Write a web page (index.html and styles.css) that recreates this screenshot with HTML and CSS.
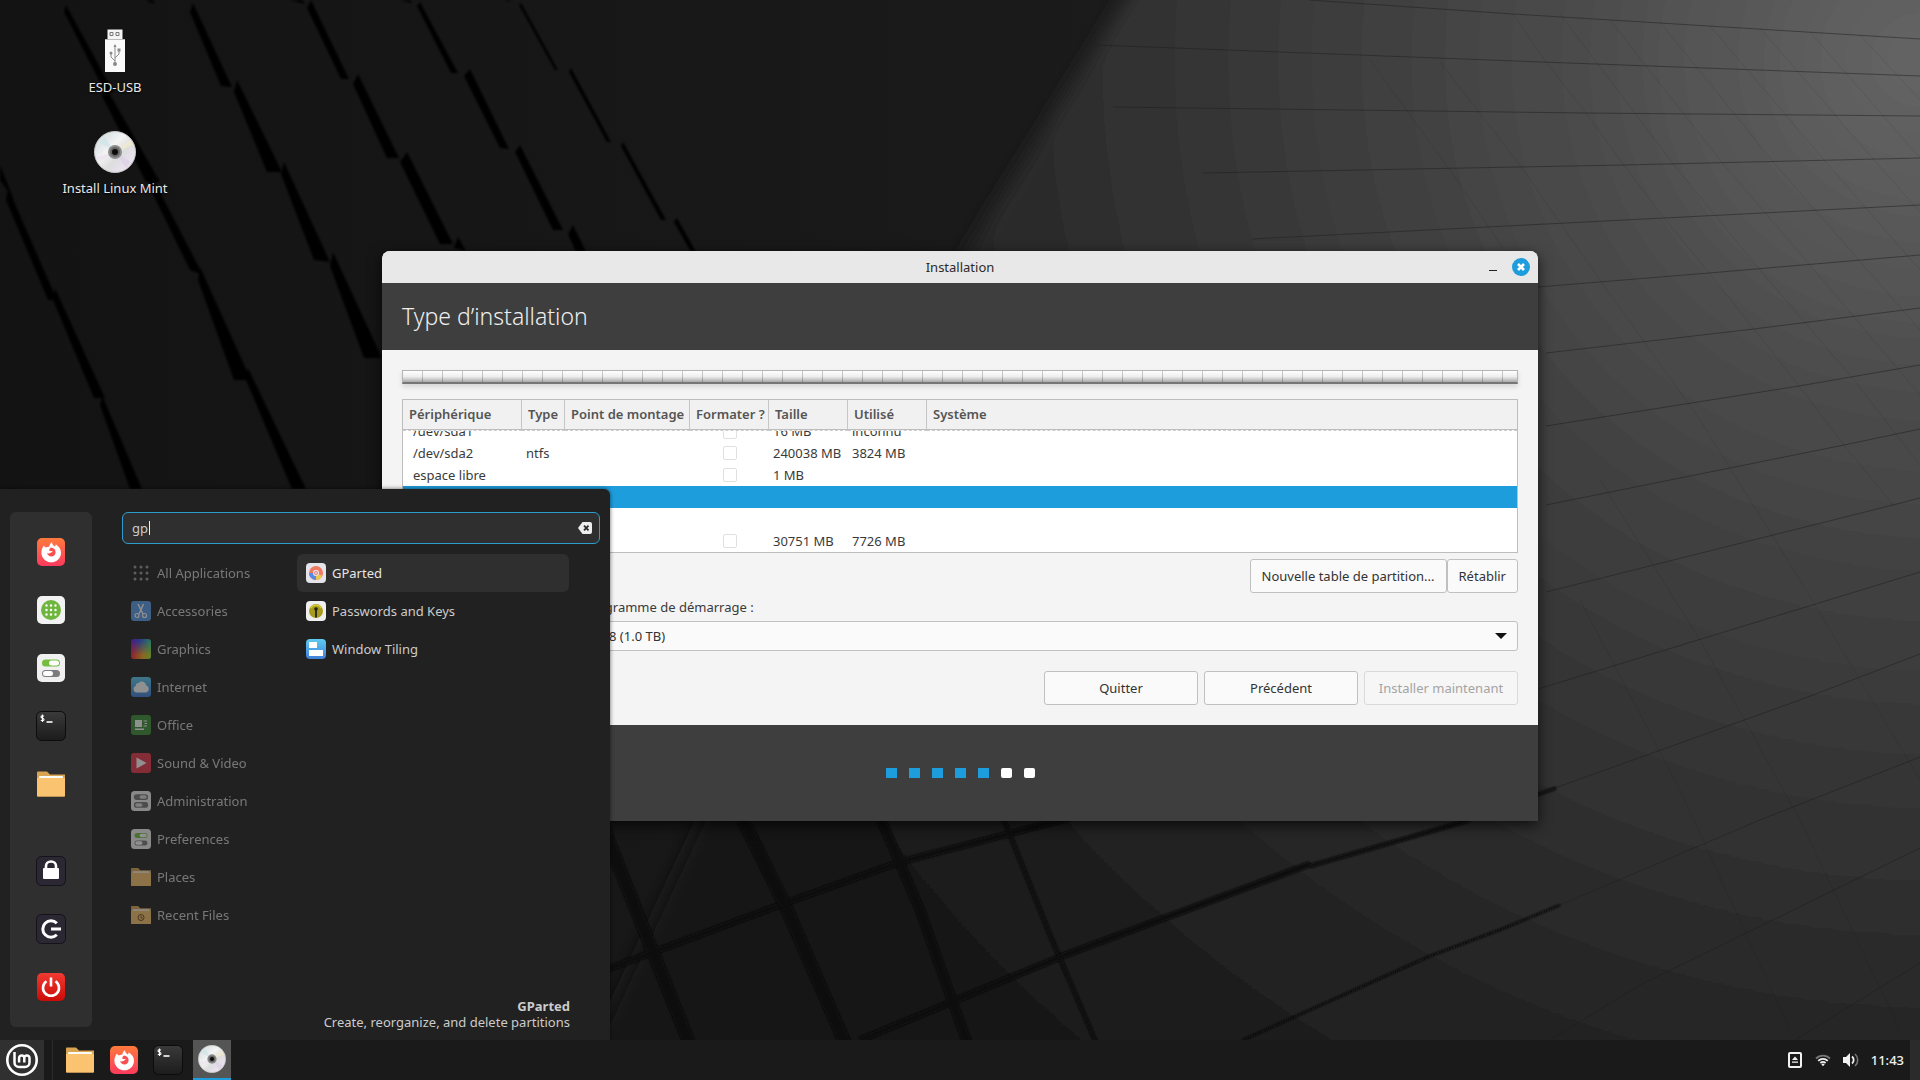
FILE: index.html
```html
<!DOCTYPE html>
<html lang="fr">
<head>
<meta charset="utf-8">
<title>Installation</title>
<link rel="stylesheet" href="styles.css">
</head>
<body>

<!-- shared icons -->
<svg class="sprite" width="0" height="0" aria-hidden="true">
  <defs>
    <linearGradient id="g-fox" x1="0" y1="0" x2="0" y2="1"><stop offset="0" stop-color="#ff7a3c"/><stop offset="1" stop-color="#fb3a5e"/></linearGradient>
    <linearGradient id="g-dark" x1="0" y1="0" x2="0" y2="1"><stop offset="0" stop-color="#3a3a3a"/><stop offset="1" stop-color="#1c1c1c"/></linearGradient>
    <linearGradient id="g-red" x1="0" y1="0" x2="0" y2="1"><stop offset="0" stop-color="#f03a32"/><stop offset="1" stop-color="#cc0a08"/></linearGradient>
    <linearGradient id="g-disc" x1="0" y1="0" x2="1" y2="1"><stop offset="0" stop-color="#dcdcdc"/><stop offset=".25" stop-color="#e2e8ea"/><stop offset=".4" stop-color="#f4f4f4"/><stop offset=".6" stop-color="#ddd"/><stop offset=".75" stop-color="#e6e0ec"/><stop offset="1" stop-color="#eee"/></linearGradient>
    <linearGradient id="g-blue" x1="0" y1="0" x2="0" y2="1"><stop offset="0" stop-color="#5ecbf0"/><stop offset="1" stop-color="#3f7fd8"/></linearGradient>
    <linearGradient id="g-hue" x1="0" y1="0" x2="1" y2="0"><stop offset="0" stop-color="#7a18d8"/><stop offset=".4" stop-color="#3b4cf0"/><stop offset="1" stop-color="#35d2a0"/></linearGradient>
    <linearGradient id="g-hue2" x1="0" y1="0" x2="1" y2="0"><stop offset="0" stop-color="#ff2038"/><stop offset=".6" stop-color="#f0b020"/><stop offset="1" stop-color="#a8e030"/></linearGradient>
    <linearGradient id="g-fade" x1="0" y1="0" x2="0" y2="1"><stop offset=".1" stop-color="#000"/><stop offset=".8" stop-color="#fff"/></linearGradient>
    <mask id="m-fade"><rect width="20" height="20" fill="url(#g-fade)"/></mask>
  </defs>
  <symbol id="firefox" viewBox="0 0 28 28">
    <rect width="28" height="28" rx="5" fill="url(#g-fox)"/>
    <path d="M7 7.500c.5 1 1 1.500 1.800 1.900 1-.6 2.300-.8 3.400-.6.200-2 1.300-3.800 2.900-4.600-.2 2.300 1.300 3.200 2.800 4.400.6-.6.900-1.300.8-2.300 3 2 5.300 4.800 5.300 8.400 0 5.400-4.300 9.600-9.700 9.600S4.400 20 4.400 14.700c0-2.800 1-5.300 2.600-7.200z" fill="#fff"/>
    <path d="M18.600 14.200c0 2.600-1.800 4.300-4 4.300-2.300 0-4-1.500-4.500-3.500 1 .6 2.300.5 3.200-.1.900-.6 1.500-.8 2.400-.8-.3-1-1.500-1.200-3.200-1-.5-1.400.1-2.600 1.500-3.500 2.600.2 4.600 2 4.600 4.600z" fill="#fa4f50"/>
  </symbol>
  <symbol id="apps" viewBox="0 0 28 28">
    <rect width="28" height="28" rx="5" fill="#f2f2f2"/>
    <circle cx="14" cy="14" r="10" fill="#6fb63e"/>
    <path d="M9.500 9.500h.01M14 9.500h.01M18.500 9.500h.01M9.500 14h.01M14 14h.01M18.500 14h.01M9.500 18.500h.01M14 18.500h.01M18.500 18.500h.01" stroke="#fff" stroke-width="2.400" stroke-linecap="round"/>
  </symbol>
  <symbol id="switches" viewBox="0 0 28 28">
    <rect width="28" height="28" rx="5" fill="#f0f0f0"/>
    <rect x="5" y="5.500" width="18" height="7" rx="3.500" fill="#74bd3f"/>
    <rect x="12" y="6.500" width="10" height="5" rx="2.500" fill="#fff"/>
    <rect x="5" y="16" width="18" height="7" rx="3.500" fill="#7c7c7c"/>
    <rect x="6" y="17" width="10" height="5" rx="2.500" fill="#fff"/>
  </symbol>
  <symbol id="switches-grey" viewBox="0 0 28 28">
    <rect width="28" height="28" rx="5" fill="#f0f0f0"/>
    <rect x="4" y="4.500" width="20" height="8" rx="4" fill="#777"/>
    <rect x="12" y="6" width="10" height="5" rx="2.500" fill="#ddd"/>
    <rect x="4" y="15.500" width="20" height="8" rx="4" fill="#777"/>
    <rect x="6" y="17" width="10" height="5" rx="2.500" fill="#ddd"/>
  </symbol>
  <symbol id="terminal" viewBox="0 0 30 30">
    <rect x=".5" y=".5" width="29" height="29" rx="5" fill="url(#g-dark)" stroke="#0c0c0c"/>
    <path d="M8 5.200C6.800 4.400 5 4.700 5 6c0 1.500 3 1 3 2.500 0 1.300-2 1.500-3.200.6M6.500 3.500v7.500" fill="none" stroke="#fff" stroke-width="1.100"/>
    <path d="M10.500 11h6" stroke="#fff" stroke-width="1.600"/>
  </symbol>
  <symbol id="folder" viewBox="0 0 28 28">
    <path d="M0 2.500C0 2 .5 1.500 1 1.500h9l3 3h15v21c0 .6-.4 1-1 1H1c-.6 0-1-.4-1-1z" fill="#d9a452"/>
    <rect x="2" y="6" width="24" height="5" rx="1" fill="#fbfbf5"/>
    <path d="M0 8h28v17.500c0 .6-.4 1-1 1H1c-.6 0-1-.4-1-1z" fill="#f9c36f"/>
  </symbol>
  <symbol id="lock" viewBox="0 0 30 30">
    <rect x=".5" y=".5" width="29" height="29" rx="5" fill="#2b2733" stroke="#15131a"/>
    <rect x="7" y="12" width="16" height="11" rx="1" fill="#fff"/>
    <path d="M10 13v-3a5 4.500 0 0 1 10 0v3" fill="none" stroke="#fff" stroke-width="2.600"/>
  </symbol>
  <symbol id="logout" viewBox="0 0 30 30">
    <rect x=".5" y=".5" width="29" height="29" rx="5" fill="#2b2733" stroke="#15131a"/>
    <path d="M20.800 9.200a8.200 8.200 0 1 0 0 11.600M15 15h10" fill="none" stroke="#fff" stroke-width="3"/>
  </symbol>
  <symbol id="power" viewBox="0 0 28 28">
    <rect width="28" height="28" rx="5" fill="url(#g-red)"/>
    <path d="M9.500 8.200a8 8 0 1 0 9 0M14 4.500v9" fill="none" stroke="#fff" stroke-width="2.600"/>
  </symbol>
  <symbol id="disc" viewBox="0 0 42 42">
    <circle cx="21" cy="21" r="20.500" fill="url(#g-disc)" stroke="#c4c4c4"/>
    <path d="M21 21 5 11l5-6z" fill="#cfe4e8" opacity=".7"/>
    <path d="M21 21 37 31l-5 6z" fill="#ddcfe8" opacity=".7"/>
    <path d="M21 21 5 31l-3-5z" fill="#ecdff0" opacity=".7"/>
    <path d="M21 21 36 9l3 5z" fill="#f1ecc8" opacity=".7"/>
    <circle cx="21" cy="21" r="7" fill="#8c8c8c"/>
    <circle cx="21" cy="21" r="5" fill="#666"/>
    <circle cx="21" cy="21" r="3" fill="#0c0c0c"/>
  </symbol>
</svg>

<main class="desktop">
  <svg class="wallpaper" viewBox="0 0 1920 1080" preserveAspectRatio="xMidYMid slice" aria-hidden="true">
    <defs>
      <linearGradient id="w-base" x1="0" y1="0" x2="1" y2="0"><stop offset="0" stop-color="#131313"/><stop offset=".6" stop-color="#1b1b1b"/></linearGradient>
      <radialGradient id="w-light" gradientUnits="userSpaceOnUse" cx="1920" cy="60" r="1400"><stop offset="0" stop-color="#656565"/><stop offset=".25" stop-color="#4b4b4b"/><stop offset=".5" stop-color="#363636"/><stop offset=".72" stop-color="#252525"/><stop offset="1" stop-color="#151515"/></radialGradient>
      <filter id="w-soft"><feGaussianBlur stdDeviation="9"/></filter>
      <filter id="w-edge"><feGaussianBlur stdDeviation="1"/></filter>
    </defs>
    <rect width="1920" height="1080" fill="url(#w-base)"/>
    <path d="M1150-40 967 251 560 1120H1960V-40z" fill="url(#w-light)" filter="url(#w-soft)"/>
    <!-- tile gaps, upper left -->
    <g fill="#060606" filter="url(#w-edge)">
      <path d="M0 165 14 200 0 180zM8 188 57 300 48 300 6 200zM55 288 105 398 94 398 53 300zM102 395 142 489 130 489 100 405z"/>
      <path d="M66 5 114 93 104 90 64 12zM104 84 160 182 146 182 102 96zM151 175 203 275 190 270 149 186zM200 267 251 380 234 380 198 280zM248 368 306 489 292 489 246 380z"/>
      <path d="M193 3 232 87 221 86 190 12zM237 80 282 172 267 172 234 92zM284 162 330 262 314 260 281 174zM333 252 382 358 364 358 330 266z"/>
      <path d="M311 0 349 79 341 79 307 8zM358 74 399 158 387 158 353 84zM407 152 453 244 440 244 400 162zM458 237 466 251 454 248z"/>
      <path d="M420 2 458 73 451 73 417 6zM470 69 509 149 500 148 464 76zM520 145 563 230 553 230 515 152zM573 225 586 252 576 252 568 234z"/>
      <path d="M521 3 558 70 555 70 519 5zM571 68 611 142 607 142 569 72zM623 142 666 220 661 220 621 146zM677 218 696 252 691 252 674 222z"/>
      <path d="M145 0h8l2 4zM290 0h12l3 4zM400 0h10l2 3zM504 0h5l2 2z"/>
    </g>
    <!-- tile gaps, bottom -->
    <g fill="none" stroke="#080808" filter="url(#w-edge)">
      <path d="M560 700 609 842 690 1045" stroke-width="12"/>
      <path d="M738 810 785 905 846 1045" stroke-width="12"/>
      <path d="M877 810 920 910 968 1045" stroke-width="9"/>
      <path d="M1002 815 1050 935 1097 1045" stroke-width="4"/>
      <path d="M600 972 780 905 900 862 1070 818" stroke-width="6"/>
      <path d="M860 1040 1065 955 1310 864" stroke-width="6"/>
      <path d="M1310 866 1470 820" stroke-width="4"/>
      <path d="M1445 827 1556 788" stroke-width="3"/>
      <path d="M1243 1040 1430 956 1502 929 1560 905" stroke-width="2"/>
    </g>
    <!-- seams on the lit side -->
    <g fill="none" stroke="#1e1e1e" stroke-width="1" opacity=".5">
      <path d="M1309 0 1513 14 1920 39M1097 45 1542 62 1920 76M1113 107 1584 113 1920 116M1203 173 1624 165 1920 158M1252 239 1664 218 1920 205M1538 287 1709 273 1920 255M1546 353 1754 329 1920 308M1546 426 1799 386 1920 365M1546 505 1844 445 1920 429M1546 592 1893 505 1920 498M1538 689 1920 572M1555 788 1800 700 1920 654M1560 905 1760 820 1920 757M1550 1040 1640 985 1920 848M1795 1040 1920 963"/>
    </g>
    <g fill="none" stroke="#000" stroke-width="1" opacity=".08">
      <path d="M1513 14 1546 62 1586 113 1624 165 1664 218 1709 273 1754 329 1799 386 1844 445 1893 505"/>
      <path d="M1560 14 1674 165 1760 270 1850 375 1920 465M1610 20 1724 165 1810 265 1920 395M1660 22 1774 163 1920 330M1710 26 1824 160 1920 270M1760 28 1874 160 1920 212M1810 32 1920 158M1860 35 1920 100"/>
      <path d="M1440 62 1520 165 1600 280 1700 420 1800 580 1920 780M1370 60 1450 170 1538 300M1600 480 1700 640 1800 820 1900 1030M1580 600 1680 790 1790 1030"/>
    </g>
  </svg>

  <section class="launchers">
    <a class="launcher" href="#">
      <svg width="44" height="44" viewBox="0 0 44 44" aria-hidden="true">
        <path d="M14.500.5h15v10h-15z" fill="#f4f4f4"/>
        <path d="M17 3.500h3v3h-3zM23 3.500h3v3h-3z" fill="none" stroke="#777"/>
        <rect x="12" y="10" width="20" height="33" fill="#fafafa"/>
        <path d="M12 10.500h20" stroke="#bbb"/>
        <path d="M22 35V16M22 32l-4-4v-4M22 29l4-4v-4" fill="none" stroke="#8a8a8a"/>
        <circle cx="22" cy="35" r="2" fill="#8a8a8a"/><circle cx="18" cy="24" r="1.500" fill="#8a8a8a"/>
        <path d="M24.500 19.500h3v3h-3zM20.500 18 22 15l1.500 3z" fill="#8a8a8a"/>
      </svg>
      <span>ESD-USB</span>
    </a>
    <a class="launcher" href="#">
      <svg width="42" height="44" aria-hidden="true"><use href="#disc"/></svg>
      <span>Install Linux Mint</span>
    </a>
  </section>

  <section class="window">
    <header class="titlebar">
      <span class="title">Installation</span>
      <button class="minimize" aria-label="Réduire"></button>
      <button class="close" aria-label="Fermer">
        <svg width="18" height="18" viewBox="0 0 18 18" aria-hidden="true"><circle cx="9" cy="9" r="9" fill="#1e9ddd"/><path d="M6 6l6 6M12 6l-6 6" stroke="#fff" stroke-width="2.600"/></svg>
      </button>
    </header>
    <h1 class="page-title">Type d’installation</h1>

    <div class="page">
      <div class="disk-bar"></div>

      <div class="table-box">
        <table class="partitions">
          <colgroup>
            <col class="c-device"><col class="c-type"><col class="c-mount"><col class="c-format"><col class="c-size"><col class="c-size"><col>
          </colgroup>
          <thead>
            <tr><th>Périphérique</th><th>Type</th><th>Point de montage</th><th>Formater ?</th><th>Taille</th><th>Utilisé</th><th>Système</th></tr>
          </thead>
          <tbody>
            <tr class="scrolled">
              <td><div>/dev/sda1</div></td><td></td><td></td>
              <td><div><input type="checkbox" aria-label="Formater /dev/sda1"></div></td>
              <td><div>16 MB</div></td><td><div>inconnu</div></td><td></td>
            </tr>
            <tr>
              <td>/dev/sda2</td><td>ntfs</td><td></td>
              <td><input type="checkbox" aria-label="Formater /dev/sda2"></td>
              <td>240038 MB</td><td>3824 MB</td><td></td>
            </tr>
            <tr>
              <td>espace libre</td><td></td><td></td>
              <td><input type="checkbox" aria-label="Formater l’espace libre"></td>
              <td>1 MB</td><td></td><td></td>
            </tr>
            <tr class="selected"><td></td><td></td><td></td><td></td><td></td><td></td><td></td></tr>
            <tr><td></td><td></td><td></td><td></td><td></td><td></td><td></td></tr>
            <tr>
              <td></td><td></td><td></td>
              <td><input type="checkbox" aria-label="Formater"></td>
              <td>30751 MB</td><td>7726 MB</td><td></td>
            </tr>
          </tbody>
        </table>
      </div>

      <div class="table-actions">
        <button class="btn">Nouvelle table de partition...</button>
        <button class="btn">Rétablir</button>
      </div>

      <label class="boot-label" for="boot">Périphérique pour installer le programme de démarrage :</label>
      <div class="select-wrap">
        <select id="boot" class="boot-select"><option>/dev/sda ATA ST1000DM003CH1 8 (1.0 TB)</option></select>
      </div>

      <div class="nav">
        <button class="btn">Quitter</button>
        <button class="btn">Précédent</button>
        <button class="btn" disabled>Installer maintenant</button>
      </div>
    </div>

    <footer class="steps">
      <i class="done"></i><i class="done"></i><i class="done"></i><i class="done"></i><i class="done"></i><i></i><i></i>
    </footer>
  </section>

  <section class="menu">
    <nav class="favorites">
      <div>
        <button aria-label="Firefox"><svg width="28" height="28"><use href="#firefox"/></svg></button>
        <button aria-label="Software Manager"><svg width="28" height="28"><use href="#apps"/></svg></button>
        <button aria-label="System Settings"><svg width="28" height="28"><use href="#switches"/></svg></button>
        <button aria-label="Terminal"><svg width="30" height="30"><use href="#terminal"/></svg></button>
        <button aria-label="Files"><svg width="28" height="28"><use href="#folder"/></svg></button>
      </div>
      <div>
        <button aria-label="Lock Screen"><svg width="30" height="30"><use href="#lock"/></svg></button>
        <button aria-label="Log Out"><svg width="30" height="30"><use href="#logout"/></svg></button>
        <button aria-label="Quit"><svg width="28" height="28"><use href="#power"/></svg></button>
      </div>
    </nav>

    <div class="menu-main">
      <div class="search">
        <input type="text" value="gp" aria-label="Search">
        <button aria-label="Clear">
          <svg width="14" height="12" viewBox="0 0 14 12"><path d="M4.500 0H12a2 2 0 0 1 2 2v8a2 2 0 0 1-2 2H4.500L0 6z" fill="#eee"/><path d="M6 3.700l4.500 4.600M10.500 3.700 6 8.300" stroke="#2b2b2b" stroke-width="1.800"/></svg>
        </button>
      </div>

      <div class="lists">
        <div class="categories">
          <button><svg width="20" height="20" viewBox="0 0 20 20"><path d="M4 4h.01M10 4h.01M16 4h.01M4 10h.01M10 10h.01M16 10h.01M4 16h.01M10 16h.01M16 16h.01" stroke="#999" stroke-width="3" stroke-linecap="round"/></svg>All Applications</button>
          <button><svg width="20" height="20" viewBox="0 0 20 20"><rect width="20" height="20" rx="3" fill="#5a9be8"/><path d="M7 3l5 10M12.500 3 8 13" stroke="#fff" stroke-width="1.400"/><circle cx="6" cy="14.500" r="2" fill="none" stroke="#fff" stroke-width="1.200"/><circle cx="13.500" cy="14.500" r="2" fill="none" stroke="#fff" stroke-width="1.200"/></svg>Accessories</button>
          <button><svg width="20" height="20" viewBox="0 0 20 20"><rect width="20" height="20" rx="3" fill="url(#g-hue)"/><rect width="20" height="20" rx="3" fill="url(#g-hue2)" mask="url(#m-fade)"/></svg>Graphics</button>
          <button><svg width="20" height="20" viewBox="0 0 20 20"><rect width="20" height="20" rx="3" fill="url(#g-blue)"/><path d="M5.500 15.500a3.300 3.300 0 0 1-.8-6.400 3 3 0 0 1 3-3.200 4.300 4.300 0 0 1 7.500 2.600 3.600 3.600 0 0 1-.7 7z" fill="#fff"/></svg>Internet</button>
          <button><svg width="20" height="20" viewBox="0 0 20 20"><rect width="20" height="20" rx="3" fill="#3f8f3a"/><path d="M4 5h7v7H4zM4 13.500h9V15H4z" fill="#fff"/><path d="M12.500 6H16M13.500 8.500H16M12.500 11H16" stroke="#fff"/></svg>Office</button>
          <button><svg width="20" height="20" viewBox="0 0 20 20"><rect width="20" height="20" rx="3" fill="#e83a4c"/><path d="M5.500 4.500 15.500 10l-10 5.500z" fill="#fff"/></svg>Sound &amp; Video</button>
          <button><svg width="20" height="20"><use href="#switches-grey"/></svg>Administration</button>
          <button><svg width="20" height="20"><use href="#switches"/></svg>Preferences</button>
          <button><svg width="20" height="20"><use href="#folder"/></svg>Places</button>
          <button><svg width="20" height="20" viewBox="0 0 20 20"><use href="#folder"/><circle cx="10" cy="12.500" r="3" fill="none" stroke="#6a4a20"/><path d="M10 11v2h1.500" fill="none" stroke="#6a4a20"/></svg>Recent Files</button>
        </div>
        <div class="results">
          <button class="active"><svg width="20" height="20" viewBox="0 0 20 20"><rect width="20" height="20" rx="4" fill="#e4e4ea"/><circle cx="10" cy="10" r="5" fill="none" stroke="#ee7a62" stroke-width="4"/><path d="M5 10a5 5 0 0 0 5 5" fill="none" stroke="#5a8ae8" stroke-width="4"/><path d="M10 15a5 5 0 0 0 4.500-3" fill="none" stroke="#e8c84e" stroke-width="4"/><circle cx="10" cy="10" r="3" fill="#f0d8d8"/><circle cx="10" cy="10" r="1.500" fill="none" stroke="#e08a80"/></svg>GParted</button>
          <button><svg width="20" height="20" viewBox="0 0 20 20"><rect width="20" height="20" rx="4" fill="#efefef"/><circle cx="10" cy="10" r="7" fill="#a89b1c"/><path d="M4.500 7a7 7 0 0 1 11 0" fill="none" stroke="#d6cb3a" stroke-width="1.500"/><circle cx="10" cy="8" r="1.800" fill="#222"/><path d="M10 8v8.500" stroke="#222" stroke-width="1.800"/></svg>Passwords and Keys</button>
          <button><svg width="20" height="20" viewBox="0 0 20 20"><rect width="20" height="20" rx="4" fill="url(#g-blue)"/><path d="M3 3h8v6H3zM3 11h14v6H3z" fill="#fff"/></svg>Window Tiling</button>
        </div>
      </div>

      <div class="app-info">
        <strong>GParted</strong>
        <span>Create, reorganize, and delete partitions</span>
      </div>
    </div>
  </section>
</main>

<footer class="panel">
  <button class="menu-button" aria-label="Menu">
    <svg width="32" height="32" viewBox="0 0 32 32"><circle cx="16" cy="16" r="14.700" fill="none" stroke="#fff" stroke-width="2.600"/><path d="M8.500 8v10.500a4.500 4.500 0 0 0 4.500 4.500h6a4.500 4.500 0 0 0 4.500-4.500V14a2.600 2.600 0 0 0-5.200 0v4.500M18.300 14a2.600 2.600 0 0 0-5.200 0v4.500" fill="none" stroke="#fff" stroke-width="2.500"/></svg>
  </button>
  <div class="tasks">
    <button aria-label="Files"><svg width="28" height="28"><use href="#folder"/></svg></button>
    <button aria-label="Firefox"><svg width="28" height="28"><use href="#firefox"/></svg></button>
    <button aria-label="Terminal"><svg width="30" height="30"><use href="#terminal"/></svg></button>
    <button class="running" aria-label="Installation"><svg width="28" height="28"><use href="#disc"/></svg></button>
  </div>
  <div class="tray">
    <button aria-label="Removable drives"><svg width="16" height="16" viewBox="0 0 16 16"><rect x="2" y="1" width="12" height="14" rx="1" fill="none" stroke="#f2f2f2" stroke-width="2"/><path d="M8 4.500 11 8H5zM5 9.500h6v1.300H5z" fill="#f2f2f2"/></svg></button>
    <button aria-label="Network"><svg width="16" height="16" viewBox="0 0 16 16"><path d="M1 6.500a10 10 0 0 1 14 0" fill="none" stroke="#777" stroke-width="1.800"/><path d="M3.200 8.800a7 7 0 0 1 9.600 0M5.400 11a4 4 0 0 1 5.200 0" fill="none" stroke="#f2f2f2" stroke-width="1.800"/><path d="M6.300 12.300 8 14.300l1.700-2a2.500 2.500 0 0 0-3.400 0z" fill="#f2f2f2"/></svg></button>
    <button aria-label="Sound"><svg width="16" height="16" viewBox="0 0 16 16"><path d="M0 5h3l4-4v14l-4-4H0z" fill="#f2f2f2"/><path d="M9 4.500a4.500 4.500 0 0 1 0 7" fill="none" stroke="#f2f2f2" stroke-width="1.800"/><path d="M12 2a8 8 0 0 1 0 12" fill="none" stroke="#777" stroke-width="1.600"/></svg></button>
    <time>11:43</time>
  </div>
  <button class="show-desktop" aria-label="Show desktop"></button>
</footer>

</body>
</html>
```
FILE: styles.css
```css
* { box-sizing: border-box; }
body {
  margin: 0; height: 100vh; display: flex; flex-direction: column; overflow: hidden;
  background: #151515; color: #3a3a3a;
  font-family: "Noto Sans", sans-serif; font-size: 13px; line-height: 16px;
}
button, input, select { font: inherit; color: inherit; margin: 0; }
button { border: 0; background: none; padding: 0; }
svg { display: block; flex: none; }
.sprite { position: absolute; }

/* desktop */
.desktop { position: relative; flex: 1; min-height: 0; }
.wallpaper { position: absolute; top: 0; left: 0; width: 100vw; height: 100vh; }
.launchers {
  position: relative; width: 230px; padding-top: 29px;
  display: flex; flex-direction: column; gap: 35px;
}
.launcher {
  display: flex; flex-direction: column; align-items: center; gap: 6px;
  color: #e8e8e8; text-decoration: none; text-shadow: 0 1px 2px #000;
}

/* installer window */
.window {
  position: absolute; top: 251px; left: 382px; right: 382px;
  background: #f4f4f4; border-radius: 8px 8px 0 0; overflow: hidden;
  box-shadow: 0 4px 14px rgba(0,0,0,.7);
}
.titlebar {
  height: 32px; padding: 0 8px; background: #e8e8e8; color: #2b2b2b;
  display: grid; grid-template-columns: 1fr auto 1fr; align-items: center; column-gap: 16px;
}
.title { grid-column: 2; }
.titlebar .minimize { grid-column: 3; justify-self: end; width: 8px; height: 8px; margin-right: 33px; border-bottom: 1px solid #222; }
.titlebar .close { grid-column: 3; justify-self: end; }
.titlebar .minimize, .titlebar .close { grid-row: 1; }
.page-title {
  margin: 0; height: 67px; padding: 0 20px; background: #3e3e3e; color: #eee;
  font-size: 23px; font-weight: 300; line-height: 67px;
}
.page { padding: 20px; }

.disk-bar {
  height: 14px; margin-bottom: 15px;
  border: 1px solid #b4b4b4; border-bottom: 2px solid #777;
  background:
    repeating-linear-gradient(90deg, transparent 0 19px, rgba(0,0,0,.2) 19px 20px),
    linear-gradient(#fff, #eee 50%, #aaa);
  box-shadow: 0 3px 5px rgba(0,0,0,.12);
}

.table-box { border: 1px solid #bdbdbd; background: #fff; }
.partitions { width: 100%; table-layout: fixed; border-collapse: separate; border-spacing: 0; }
.c-device { width: 119px; }
.c-type { width: 43px; }
.c-mount { width: 125px; }
.c-format, .c-size { width: 79px; }
.partitions th {
  height: 30px; padding: 0 0 2px 6px; text-align: left; white-space: nowrap;
  background: #f1f1f1; color: #555; font-weight: 600;
  border-right: 1px solid #c6c6c6; border-bottom: 1px solid #bdbdbd;
}
.partitions th:last-child { border-right: 0; }
.partitions td { height: 22px; padding: 0 0 0 4px; white-space: nowrap; }
.partitions td:first-child { padding-left: 10px; }
.partitions td:nth-child(4) { padding: 0; }
.partitions .scrolled td { height: 12px; border-top: 1px dashed #ccc; }
.scrolled div { height: 11px; display: flex; align-items: flex-end; overflow: hidden; padding-bottom: 3px; }
.scrolled input { flex: none; }
.partitions .selected td { background: #1e9ddd; }
.partitions input {
  appearance: none; display: block; width: 14px; height: 14px; margin: 0 auto;
  border: 1px solid #e0e0e0; border-radius: 2px; background: #fff;
}

.btn {
  height: 34px; padding: 0 11px; border: 1px solid #c0c0c0; border-radius: 3px;
  background: #fafafa; color: #333; white-space: nowrap;
}
.btn:disabled { background: #f6f6f6; border-color: #dadada; color: #a4a4a4; }
.table-actions { display: flex; justify-content: flex-end; margin-top: 6px; }
.boot-label { display: block; line-height: 28px; }
.select-wrap { position: relative; }
.select-wrap::after {
  content: ""; position: absolute; right: 11px; top: 12px;
  border: 6px solid transparent; border-top-color: #111; border-bottom: 0;
}
.boot-select {
  appearance: none; width: 100%; height: 30px; padding: 0 8px;
  border: 1px solid #c0c0c0; border-radius: 3px; background: #fafafa; color: #333;
}
.nav { display: flex; justify-content: flex-end; gap: 6px; margin-top: 20px; }
.nav .btn { width: 154px; }
.steps { height: 96px; background: #3e3e3e; display: flex; justify-content: center; align-items: center; gap: 12px; }
.steps i { width: 11px; height: 10px; background: #fff; border-radius: 2px; }
.steps .done { background: #1e9ddd; border-radius: 0; }

/* start menu */
.menu {
  position: absolute; left: 0; bottom: 0; width: 610px; padding: 23px 10px 13px;
  display: flex; gap: 30px; background: #212121; color: #ccc;
  border-radius: 0 6px 0 0; box-shadow: 0 0 4px rgba(0,0,0,.6);
}
.favorites {
  width: 82px; padding: 11px 0; border-radius: 6px; background: #2f2f2f;
  display: flex; flex-direction: column; gap: 29px;
}
.favorites button { width: 100%; height: 58px; display: flex; align-items: center; justify-content: center; }
.menu-main { flex: 1; display: flex; flex-direction: column; }
.search {
  display: flex; align-items: center; height: 32px; padding: 0 7px 0 9px;
  border: 1px solid #2f9cd0; border-radius: 6px; background: #2f2f2f;
}
.search input {
  flex: 1; border: 0; padding: 0; outline: 0; height: 20px;
  background: linear-gradient(#eee, #eee) 17px 3px / 1px 14px no-repeat;
}
.lists { display: flex; flex: 1; margin-top: 10px; }
.categories { width: 175px; padding-left: 9px; }
.categories button, .results button { display: flex; align-items: center; gap: 6px; height: 38px; width: 100%; text-align: left; }
.categories button { opacity: .5; }
.results { width: 272px; }
.results button { padding-left: 9px; border-radius: 6px; }
.results .active { background: #2f2f2f; color: #e6e6e6; }
.app-info { display: flex; flex-direction: column; align-items: flex-end; padding-right: 30px; margin-bottom: -3px; }

/* bottom panel */
.panel { position: relative; height: 40px; display: flex; background: #1a1a1a; color: #f0f0f0; }
.menu-button { width: 44px; display: flex; align-items: center; justify-content: center; background: #303030; }
.tasks { display: flex; margin-left: 8px; padding-left: 8px; border-left: 1px solid #2a2a2a; gap: 6px; }
.tasks button { width: 38px; display: flex; align-items: center; justify-content: center; }
.tasks .running { background: #555; border-bottom: 2px solid #1e9ddd; }
.tray { margin-left: auto; display: flex; align-items: center; gap: 12px; padding-right: 6px; font-weight: 500; }
.show-desktop { width: 10px; background: #2b2b2b; }
```
